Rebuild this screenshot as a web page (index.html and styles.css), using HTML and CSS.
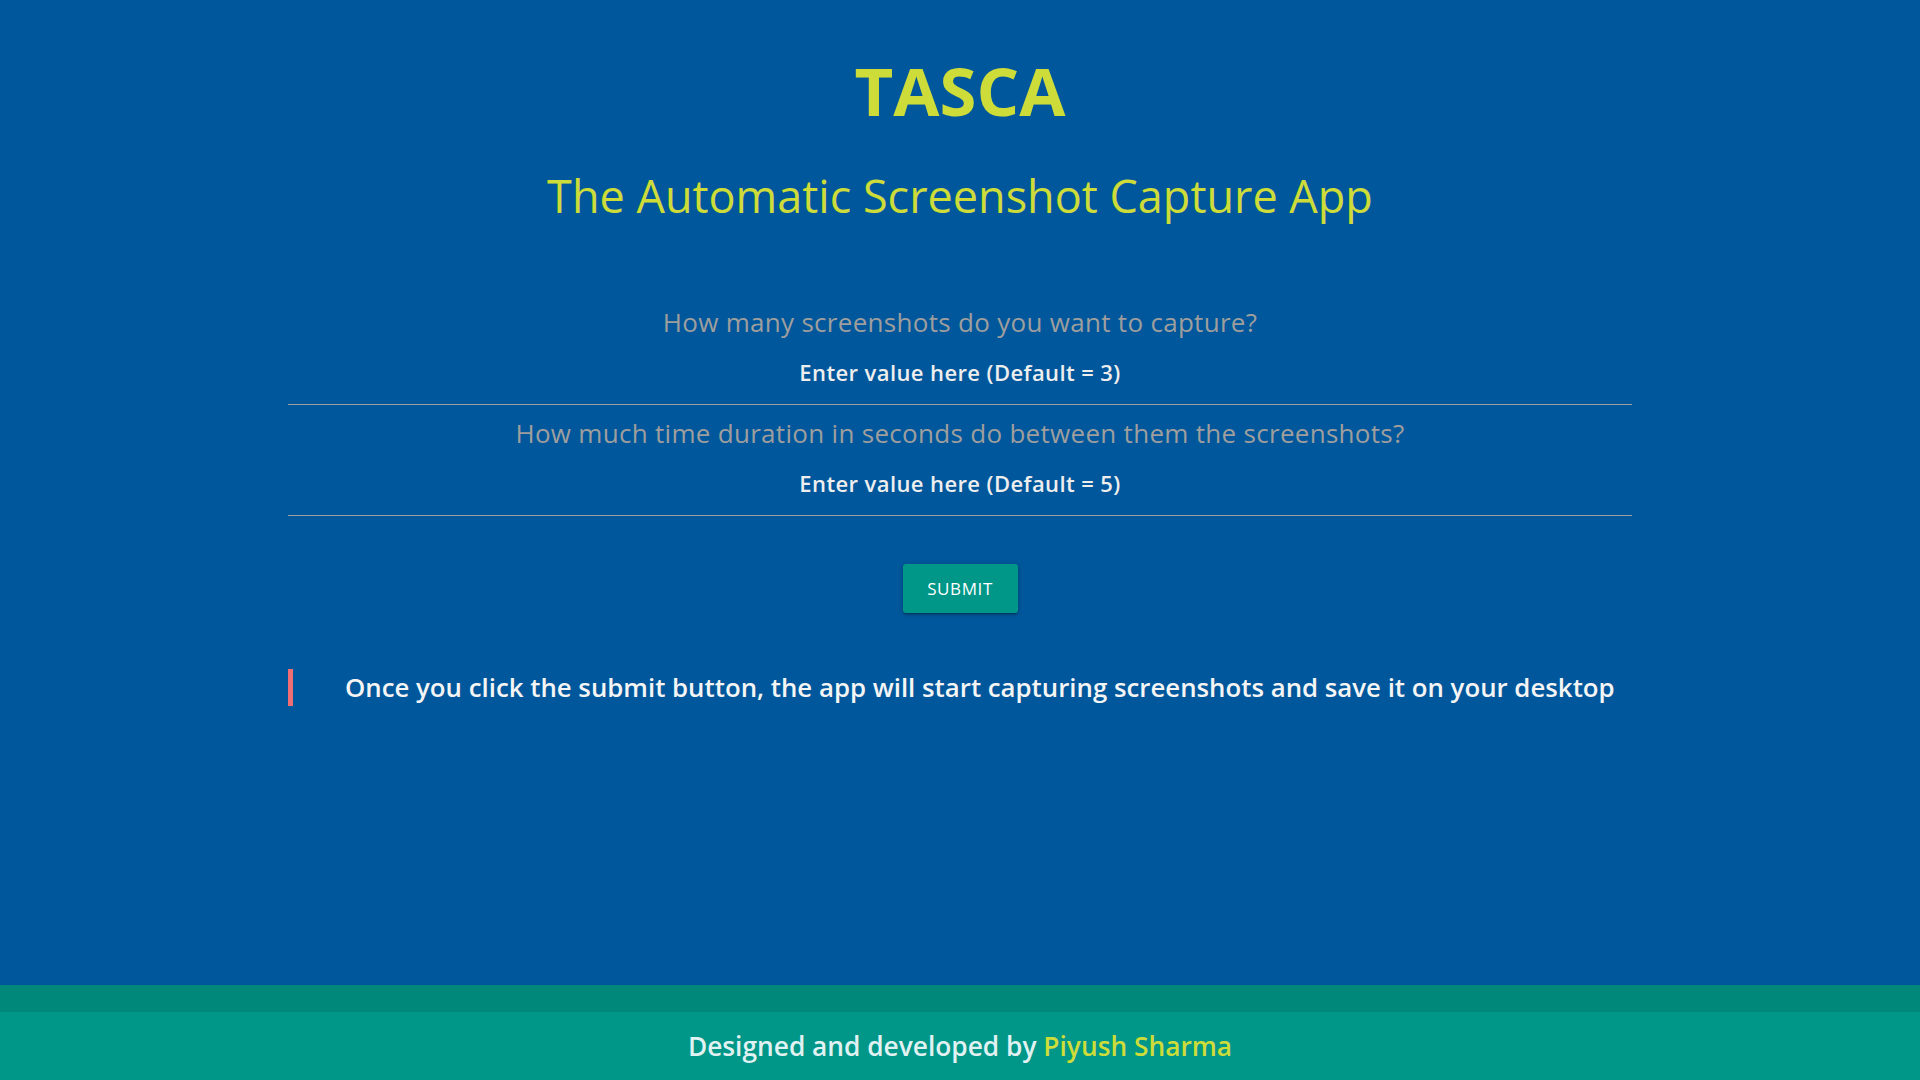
FILE: index.html
```html
<!DOCTYPE html>
<html lang="en">
<head>
<meta charset="utf-8">
<title>TASCA</title>
<link rel="stylesheet" href="styles.css">
</head>
<body>
<main class="container">
  <header class="hero">
    <h1 class="title">TASCA</h1>
    <h2 class="subtitle">The Automatic Screenshot Capture App</h2>
  </header>
  <form class="form">
    <div class="field">
      <label class="question" for="count">How many screenshots do you want to capture?</label>
      <input class="value" id="count" type="text" placeholder="Enter value here (Default = 3)">
    </div>
    <div class="field field-next">
      <label class="question" for="delay">How much time duration in seconds do between them the screenshots?</label>
      <input class="value" id="delay" type="text" placeholder="Enter value here (Default = 5)">
    </div>
    <div class="actions">
      <button class="submit" type="button">Submit</button>
    </div>
  </form>
  <blockquote class="note">Once you click the submit button, the app will start capturing screenshots and save it on your desktop</blockquote>
</main>
<footer class="footer">
  <div class="footer-band"></div>
  <div class="footer-copy">Designed and developed by <a class="author" href="#">Piyush Sharma</a></div>
</footer>
</body>
</html>
```

FILE: styles.css
```css
* { box-sizing: border-box; }
html, body { height: 100%; }
body {
  margin: 0;
  background: #01579b;
  font-family: "Open Sans", "Noto Sans", sans-serif;
  display: flex;
  flex-direction: column;
  min-height: 100vh;
}
.container {
  width: 70%;
  margin: 0 auto;
  flex: 1;
  padding-top: 52px;
}
.hero { text-align: center; }
.title {
  margin: 0;
  font-size: 67px;
  line-height: 76px;
  font-weight: 700;
  color: #cddc39;
}
.subtitle {
  margin: 40px 0 0;
  font-size: 45px;
  line-height: 56px;
  font-weight: 400;
  color: #cddc39;
}
.form { margin-top: 82px; }
.field { display: flex; flex-direction: column; }
.field-next { margin-top: 12px; }
.question {
  display: block;
  text-align: center;
  font-size: 26px;
  letter-spacing: 0.3px;
  line-height: 32px;
  color: #9e9e9e;
  margin-bottom: 11px;
}
.value {
  display: block;
  width: 100%;
  height: 56px;
  padding: 0 0 9px;
  border: none;
  border-bottom: 1px solid #9e9e9e;
  background: transparent;
  text-align: center;
  font-family: inherit;
  font-size: 22px;
  letter-spacing: 0.4px;
  font-weight: 600;
  color: #eeeeee;
  outline: none;
}
.value::placeholder { color: #eeeeee; opacity: 1; }
.actions {
  display: flex;
  justify-content: center;
  margin-top: 48px;
}
.submit {
  width: 115px;
  height: 49px;
  border: none;
  border-radius: 3px;
  background: #009688;
  color: #ffffff;
  font-family: "Open Sans", sans-serif;
  font-size: 17px;
  letter-spacing: 0.6px;
  text-transform: uppercase;
  box-shadow: 0 2px 2px 0 rgba(0,0,0,0.14), 0 3px 1px -2px rgba(0,0,0,0.12), 0 1px 5px 0 rgba(0,0,0,0.2);
}
.note {
  margin: 56px 0 0;
  padding-left: 52px;
  border-left: 5px solid #ee6e73;
  font-size: 25.8px;
  line-height: 37px;
  font-weight: 600;
  color: #f5f5f5;
}
.footer { flex: none; }
.footer-band { height: 27px; background: #00897b; }
.footer-copy {
  height: 68px;
  background: #009688;
  text-align: center;
  font-size: 26.3px;
  line-height: 68px;
  font-weight: 600;
  color: #e0f2f1;
}
.author { color: #cddc39; text-decoration: none; }
```
